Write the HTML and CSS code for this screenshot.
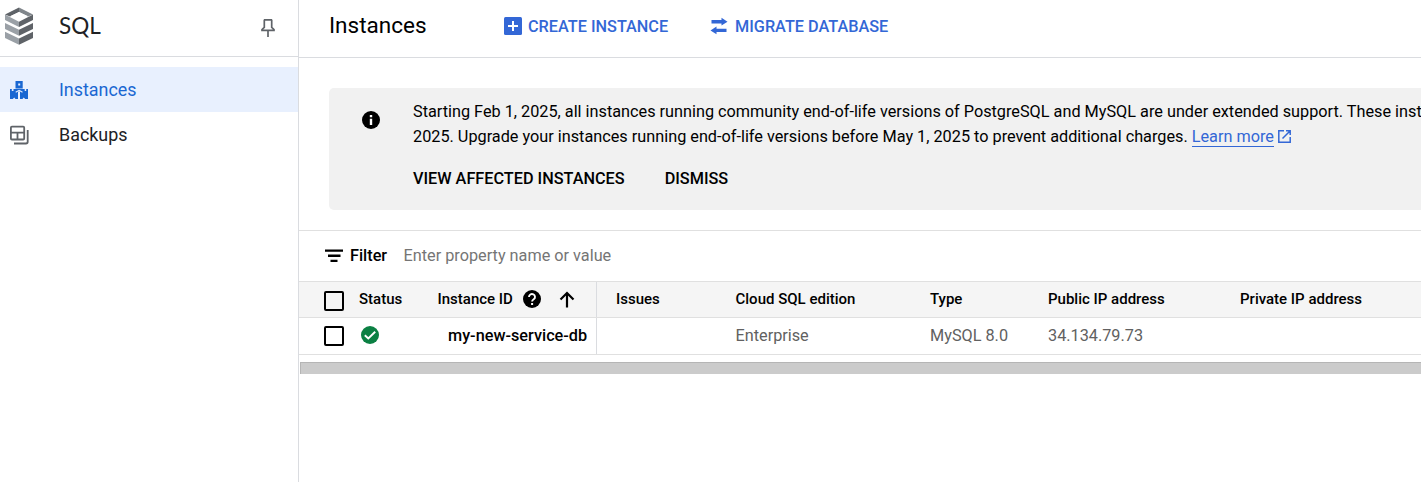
FILE: index.html
```html
<!DOCTYPE html>
<html lang="en">
<head>
<meta charset="utf-8">
<title>SQL Instances</title>
<link rel="stylesheet" href="styles.css">
</head>
<body>
<div class="app">
  <aside class="sidebar">
    <div class="brand">
      <svg class="brand-logo" width="30" height="38" viewBox="0 0 30 38">
        <path fill="#5f6368" d="M15 .5 1 7.500 6 9.500 15 5z"/>
        <path fill="#80868b" d="M15 .5 29 7.500 24 9.500 15 5z"/>
        <path fill="#9aa0a6" d="M1 7.500 15 14.700V20L1 13z"/>
        <path fill="#5f6368" d="M29 7.500 15 14.700V20l14-7z"/>
        <path fill="#fff" d="M15 5l8.500 4L15 13.200 6.500 9z"/>
        <path fill="#9aa0a6" d="M1 16 15 22.800v6L1 22zM1 24.800 15 31.500v6.200L1 31z"/>
        <path fill="#5f6368" d="M29 16 15 22.800v6L29 22z"/>
        <path fill="#5f6368" d="M29 24.800 15 31.500v6.200L29 31z"/>
      </svg>
      <span class="brand-name">SQL</span>
      <svg class="pin" width="16" height="20" viewBox="0 0 16 20" fill="none" stroke="#5f6368" stroke-width="1.700">
        <path d="M4.300 2v7.300L2 11.500v.800h12v-.800l-2.300-2.200V2M8 12.300V19M3.800 1.900h8.400"/>
      </svg>
    </div>
    <nav class="nav">
      <a class="nav-item active">
        <svg width="20" height="20" viewBox="0 0 20 20"><path fill="#1967d2" fill-rule="evenodd" d="M6.500 1h7.200v7.500H6.500zM9.200 3.500v2h2v-2zM1 9h1.800v2h1.700V9h11.200v2h1.500V9H19v10h-2.800l-1.500-1.500-1.200 1.500H11v-7H9v7H6.500L5.200 17.500 3.800 19H1z"/><path fill="none" stroke="#e8f0fe" stroke-width="1.100" d="M10.100 19V10.500M6.700 12.300l3.400-2 3.400 2"/></svg>
        <span class="nav-label">Instances</span>
      </a>
      <a class="nav-item">
        <svg width="20" height="20" viewBox="0 0 20 20" fill="none" stroke="#5f6368" stroke-width="1.800"><rect x="1.900" y="1.700" width="13.300" height="12.800" rx="1"/><path d="M2 7.600h13M8.500 7.600v6.600M18.700 5v11.800q0 1.700-1.700 1.700H5"/></svg>
        <span class="nav-label">Backups</span>
      </a>
    </nav>
  </aside>
  <main class="main">
    <header class="toolbar">
      <h1 class="title">Instances</h1>
      <a class="action create">
        <svg width="18" height="18" viewBox="0 0 18 18"><rect width="18" height="18" rx="1.500" fill="#3367d6"/><path d="M9 4v10M4 9h10" stroke="#fff" stroke-width="2"/></svg>
        <span>CREATE INSTANCE</span>
      </a>
      <a class="action migrate">
        <svg width="18" height="18" viewBox="0 0 18 18" fill="#3367d6"><path d="M1.500 3h10V.800l6 3.900-6 3.900V6.400h-10zM16.500 11.700h-10V9.500l-6 3.900 6 3.900v-2.200h10z"/></svg>
        <span>MIGRATE DATABASE</span>
      </a>
    </header>
    <section class="banner">
      <svg class="info" width="18" height="18" viewBox="0 0 18 18"><circle cx="9" cy="9" r="9"/><path d="M9 4v2.200M9 7.700V14" stroke="#fff" stroke-width="2.400"/></svg>
      <div class="banner-body">
        <p class="line">Starting Feb 1, 2025, all instances running community end-of-life versions of PostgreSQL and MySQL are under extended support. These inst</p>
        <p class="line">2025. Upgrade your instances running end-of-life versions before May 1, 2025 to prevent additional charges. <a class="link">Learn more</a><svg class="external" width="13" height="13" viewBox="0 0 13 13" fill="none" stroke="#3367d6" stroke-width="1.500"><path d="M6 .800H.800v11.400h11.400V7M8 .800h4.200V5M12 1 4.500 8.500"/></svg></p>
        <div class="banner-actions"><a>VIEW AFFECTED INSTANCES</a><a>DISMISS</a></div>
      </div>
    </section>
    <section class="table-area">
      <div class="filter">
        <svg width="18" height="14" viewBox="0 0 18 14"><path d="M0 .500h18v2.300H0zM3 5.600h12.500v2.400H3zM5.500 10.700h7V13h-7z"/></svg>
        <span class="filter-label">Filter</span>
        <span class="filter-hint">Enter property name or value</span>
      </div>
      <div class="row head">
        <span class="checkbox"></span>
        <span>Status</span>
        <span class="id-head"><span>Instance ID</span>
          <svg class="help" width="18" height="18" viewBox="0 0 18 18"><circle cx="9" cy="9" r="9"/><path d="M6 7a3 2.800 0 1 1 4.700 2.200C9.500 10 9.100 10.300 9.100 11.500" fill="none" stroke="#fff" stroke-width="1.900"/><path d="M8.100 13h2v2h-2z" fill="#fff"/></svg>
          <svg class="sort" width="16" height="18" viewBox="0 0 16 18" fill="none" stroke="#000" stroke-width="2.200"><path d="M8 17.500V3M1.500 9.500 8 3l6.500 6.500"/></svg>
        </span>
        <span class="issues">Issues</span>
        <span>Cloud SQL edition</span>
        <span>Type</span>
        <span>Public IP address</span>
        <span>Private IP address</span>
      </div>
      <div class="row data">
        <span class="checkbox"></span>
        <span class="state"><svg width="18" height="18" viewBox="0 0 18 18"><circle cx="9" cy="9" r="9" fill="#0b8043"/><path d="M3.800 9.200 7.300 12.500 14.200 5.700" fill="none" stroke="#fff" stroke-width="1.900"/></svg></span>
        <span class="id-cell"><a class="db">my-new-service-db</a></span>
        <span></span>
        <span class="cell">Enterprise</span>
        <span class="cell">MySQL 8.0</span>
        <span class="cell">34.134.79.73</span>
        <span></span>
      </div>
      <div class="scrollbar"></div>
    </section>
  </main>
</div>
</body>
</html>
```

FILE: styles.css
```css
* { box-sizing: border-box; }
body { margin: 0; background: #fff; color: #000; font-family: Roboto, sans-serif; font-size: 16.25px; overflow: hidden; }
svg { display: block; flex: none; }
.app { display: flex; width: 1421px; height: 482px; overflow: hidden; white-space: nowrap; }
.sidebar { width: 299px; flex: none; border-right: 1px solid #dadce0; }
.brand { height: 57px; border-bottom: 1px solid #dadce0; display: flex; align-items: flex-start; padding: 7px 0 0 4px; }
.brand-name { font-family: Lato, sans-serif; font-size: 22.5px; line-height: 28px; color: #202124; margin: 5px 0 0 25px; width: 201px; }
.pin { margin-top: 11px; }
.nav { padding-top: 10px; font-size: 17.9px; }
.nav-item { height: 45px; display: flex; align-items: center; padding-left: 9px; gap: 30px; color: #202124; }
.active { background: #e8f0fe; color: #1967d2; }
.main { flex: 1; min-width: 0; overflow: hidden; }
.toolbar { height: 58px; border-bottom: 1px solid #dadce0; display: flex; padding: 0 0 5px 30px; align-items: center; }
.title { font-size: 22.5px; font-weight: 400; margin: 0; line-height: 28px; padding-bottom: 2px; width: 175px; }
.action { display: flex; align-items: center; color: #3367d6; font-weight: 500; gap: 6px; }
.create { width: 206px; }
.migrate { gap: 7px; }
.banner { height: 122px; margin: 30px 0 0 30px; background: #f1f1f1; border-radius: 5px 0 0 5px; display: flex; padding: 11px 0 0 33px; }
.info { margin-top: 12px; }
.banner-body { margin-left: 33px; }
.line { margin: 0; line-height: 25px; height: 25px; }
.link { color: #3367d6; border-bottom: 1px solid #3367d6; }
.external { display: inline-block; margin-left: 4px; vertical-align: -1px; }
.banner-actions { display: flex; gap: 40px; font-weight: 500; line-height: 20px; margin-top: 20px; }
.table-area { margin-top: 20px; border-top: 1px solid #e0e0e0; }
.filter { height: 50px; display: flex; align-items: center; padding-left: 26px; }
.filter-label { font-weight: 500; margin-left: 7px; width: 53.5px; padding-bottom: 2px; }
.filter-hint { color: #757575; padding-bottom: 2px; }
.row { display: grid; grid-template-columns: 35px 78.5px 159.5px 138.5px 194.5px 118px 192px 181px; padding-left: 25px; align-items: center; }
.head { height: 36px; background: #f5f5f5; border-top: 1px solid #e0e0e0; padding-bottom: 2px; font-size: 15px; font-weight: 500; }
.data { height: 38px; border-top: 1px solid #e0e0e0; border-bottom: 1px solid #e0e0e0; color: #616161; }
.checkbox { width: 20px; height: 20px; border: 2px solid #000; border-radius: 2px; }
.head .checkbox { margin-top: 4px; }
.state { padding: 0 0 2px 2px; }
.cell { padding-bottom: 2px; }
.id-head, .id-cell { height: 100%; display: flex; align-items: center; border-right: 1px solid #dadce0; }
.id-head { height: 35px; margin-bottom: -2px; padding-bottom: 2px; }
.help { margin-left: 10px; }
.sort { margin-left: 18px; }
.id-cell { padding: 0 0 2px 10.5px; }
.db { color: #000; font-weight: 500; }
.issues { padding-left: 19px; }
.scrollbar { margin: 7px 0 0 1px; height: 12px; background: #cbcbcb; border-top: 1px solid #b5b5b5; border-left: 1px solid #b5b5b5; }
```
